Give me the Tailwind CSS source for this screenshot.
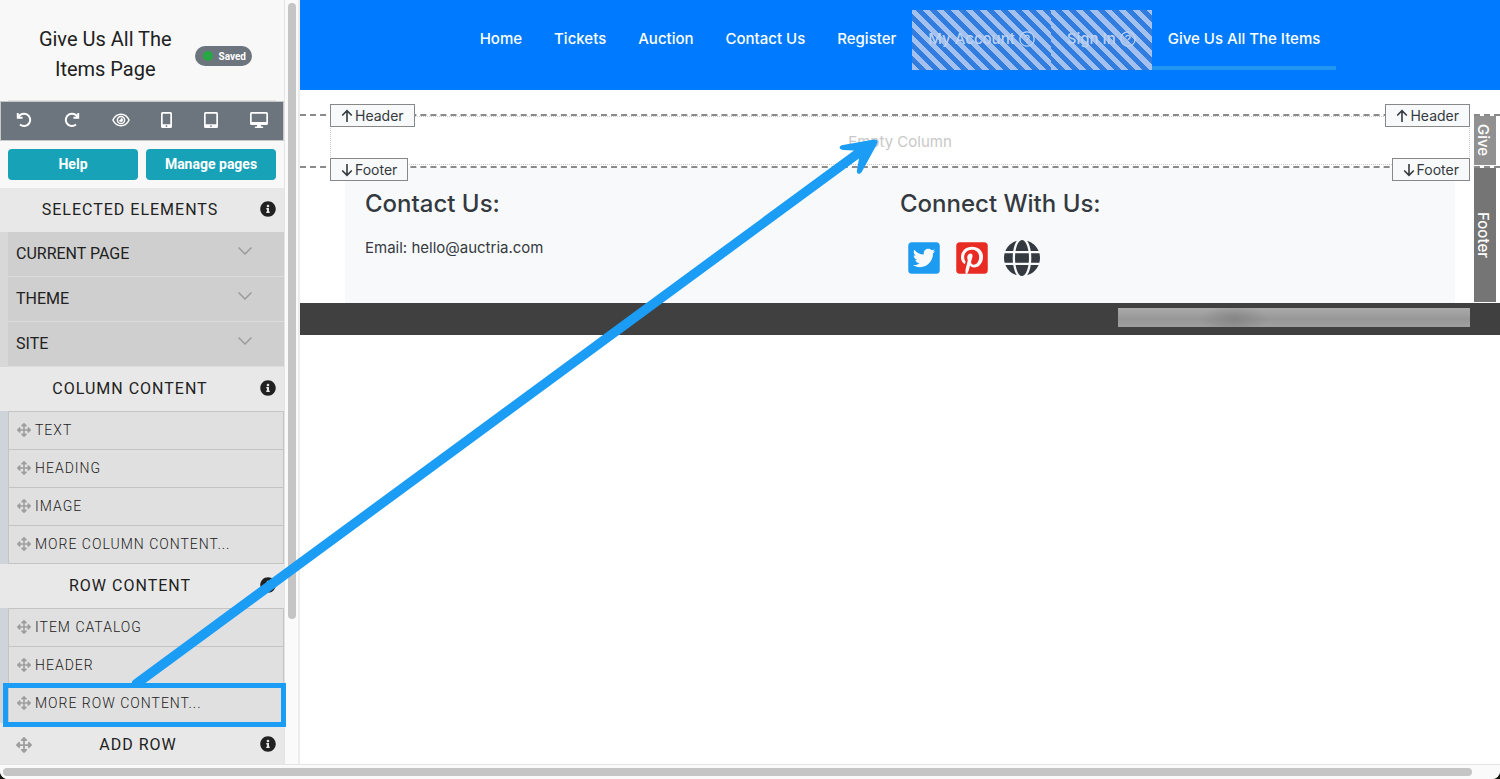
<!DOCTYPE html>
<html lang="en">
<head>
  <meta charset="UTF-8" />
  <meta name="viewport" content="width=device-width, initial-scale=1.0"/>
  <title>Give Us All The Items Page</title>
  <script src="https://cdn.jsdelivr.net/npm/@tailwindcss/browser@4"></script>
</head>
<body class="bg-[#14150c]">
  <!-- Shared icons -->
  <svg class="hidden" aria-hidden="true">
    <symbol id="move" viewBox="0 0 512 512"><path d="M352.201 425.775l-79.196 79.196c-9.373 9.373-24.568 9.373-33.941 0l-79.196-79.196c-15.119-15.119-4.411-40.971 16.971-40.97h51.162L228 284H127.196v51.162c0 21.382-25.851 32.09-40.971 16.971L7.029 272.937c-9.373-9.373-9.373-24.569 0-33.941L86.225 159.8c15.119-15.119 40.971-4.411 40.971 16.971V228H228V127.196h-51.23c-21.382 0-32.09-25.851-16.971-40.971l79.196-79.196c9.373-9.373 24.568-9.373 33.941 0l79.196 79.196c15.119 15.119 4.411 40.971-16.971 40.971h-51.162V228h100.804v-51.162c0-21.382 25.851-32.09 40.97-16.971l79.196 79.196c9.373 9.373 9.373 24.569 0 33.941L425.773 352.2c-15.119 15.119-40.971 4.411-40.97-16.971V284H284v100.804h51.23c21.382 0 32.09 25.851 16.971 40.971z"/></symbol>
    <symbol id="info" viewBox="0 0 512 512"><path d="M256 8C119.043 8 8 119.083 8 256c0 136.997 111.043 248 248 248s248-111.003 248-248C504 119.083 392.957 8 256 8zm0 110c23.196 0 42 18.804 42 42s-18.804 42-42 42-42-18.804-42-42 18.804-42 42-42zm56 254c0 6.627-5.373 12-12 12h-88c-6.627 0-12-5.373-12-12v-24c0-6.627 5.373-12 12-12h12v-64h-12c-6.627 0-12-5.373-12-12v-24c0-6.627 5.373-12 12-12h64c6.627 0 12 5.373 12 12v100h12c6.627 0 12 5.373 12 12v24z"/></symbol>
    <symbol id="chevron" viewBox="0 0 14 8"><path d="M.5.5 7 7 13.500.5" fill="none" stroke="currentColor" stroke-width="1.500"/></symbol>
    <symbol id="question" viewBox="0 0 16 16"><circle cx="8" cy="8" r="7.200" fill="none" stroke="currentColor" stroke-width="1.300"/><path d="M5.800 6.300c.1-1.300 1-2 2.200-2s2.200.7 2.200 1.900C10.200 7.600 8 7.700 8 9.300" fill="none" stroke="currentColor" stroke-width="1.300"/><circle cx="8" cy="11.400" r=".9"/></symbol>
    <symbol id="up" viewBox="0 0 12 14"><path d="M6 13V2M1.200 6.500 6 1.700l4.800 4.800" fill="none" stroke="currentColor" stroke-width="1.600"/></symbol>
    <symbol id="down" viewBox="0 0 12 14"><path d="M6 1v11M1.200 7.500 6 12.300l4.800-4.800" fill="none" stroke="currentColor" stroke-width="1.600"/></symbol>
  </svg>

  <div class="relative flex h-screen flex-col overflow-hidden rounded-b-lg bg-white">
    <div class="flex min-h-0 flex-1">

      <!-- Editor sidebar -->
      <aside class="w-[285px] shrink-0 overflow-hidden border-r border-[#e4e4e4] bg-[#f8f8f8] font-[Roboto,sans-serif] text-[#212121]">
        <div class="mx-2 flex h-[101px] items-center border-b border-[#e4e4e4] pt-2 pr-6 pl-2">
          <h1 class="flex-1 text-center text-xl leading-[30px]">Give Us All The<br>Items Page</h1>
          <span class="mt-1 flex h-5 items-center gap-1.5 rounded-full bg-[#6c757d] pr-1.5 pl-2 text-[10px] font-bold text-white"><i class="size-2.5 rounded-full bg-[#28a745]"></i>Saved</span>
        </div>

        <div class="flex h-10 items-center justify-between border border-[#c8c8c8] bg-[#6c757d] px-[15px] pb-0.5 text-white">
          <button aria-label="Undo"><svg class="size-4" viewBox="0 0 16 16" fill="none" stroke="currentColor" stroke-width="2"><path d="M1.800 1v4.800h4.800"/><path d="M2.300 5.500A6.200 6.200 0 1 1 4 12.600"/></svg></button>
          <button aria-label="Redo"><svg class="size-4" viewBox="0 0 16 16" fill="none" stroke="currentColor" stroke-width="2"><path d="M14.200 1v4.800H9.400"/><path d="M13.700 5.500A6.200 6.200 0 1 0 12 12.600"/></svg></button>
          <button aria-label="Preview"><svg class="h-4 w-[18px]" viewBox="0 0 18 16" fill="none" stroke="currentColor" stroke-width="1.500"><path d="M.9 8C2.700 4.300 5.600 2.200 9 2.200S15.300 4.300 17.100 8C15.300 11.700 12.400 13.800 9 13.800S2.700 11.700.9 8Z"/><circle cx="9" cy="8" r="3.600"/><path d="M9 6a2 2 0 1 1-2 2c.9.400 2-.8 2-2Z" fill="currentColor" stroke="none"/></svg></button>
          <button aria-label="Phone"><svg class="h-4 w-[11px]" viewBox="0 0 11 16" fill="currentColor" fill-rule="evenodd"><path d="M1.500 0h8A1.500 1.500 0 0 1 11 1.500v13A1.500 1.500 0 0 1 9.500 16h-8A1.500 1.500 0 0 1 0 14.500v-13A1.500 1.500 0 0 1 1.500 0ZM1.700 1.700v10.600h7.600V1.700ZM5.500 13.200a.9.900 0 1 0 0 1.800.9.900 0 0 0 0-1.800Z"/></svg></button>
          <button aria-label="Tablet"><svg class="h-4 w-3.5" viewBox="0 0 14 16" fill="currentColor" fill-rule="evenodd"><path d="M1.500 0h11A1.500 1.500 0 0 1 14 1.500v13a1.500 1.500 0 0 1-1.500 1.500h-11A1.500 1.500 0 0 1 0 14.500v-13A1.500 1.500 0 0 1 1.500 0ZM1.700 1.700v10.600h10.600V1.700ZM7 13.200A.9.900 0 1 0 7 15a.9.900 0 0 0 0-1.800Z"/></svg></button>
          <button aria-label="Desktop"><svg class="h-4 w-[18px]" viewBox="0 0 18 16" fill="currentColor" fill-rule="evenodd"><path d="M1.600 0h14.800A1.600 1.600 0 0 1 18 1.600v9.800a1.600 1.600 0 0 1-1.600 1.600h-5.700l.5 1.500h1.300a.75.750 0 0 1 0 1.500h-7a.75.750 0 0 1 0-1.500h1.300l.5-1.500H1.600A1.600 1.600 0 0 1 0 11.400V1.600A1.600 1.600 0 0 1 1.600 0ZM1.700 1.700v8.300h14.600V1.700Z"/></svg></button>
        </div>

        <div class="grid grid-cols-2 gap-2 p-2 text-sm font-bold text-white">
          <button class="h-[31px] rounded-sm bg-[#17a2b8] pb-0.5">Help</button>
          <button class="h-[31px] rounded-sm bg-[#17a2b8] pb-0.5">Manage pages</button>
        </div>

        <div class="flex h-11 items-center bg-[#e8e8e8] pr-2">
          <h2 class="flex-1 text-center tracking-[1px]">SELECTED ELEMENTS</h2>
          <button class="pb-0.5" aria-label="About selected elements"><svg class="size-4 fill-current"><use href="#info"/></svg></button>
        </div>
        <div class="border-l-8 border-[#d8d8d8] bg-[#cfcfcf]">
          <button class="flex h-[45px] w-full items-center justify-between border-b border-[#dcdcdc] pr-8 pb-1.5 pl-2"><span class="pt-1.5">CURRENT PAGE</span><svg class="h-2 w-3.5 text-[#9b9b9b]"><use href="#chevron"/></svg></button>
          <button class="flex h-[45px] w-full items-center justify-between border-b border-[#dcdcdc] pr-8 pb-1.5 pl-2"><span class="pt-1.5">THEME</span><svg class="h-2 w-3.5 text-[#9b9b9b]"><use href="#chevron"/></svg></button>
          <button class="flex h-[45px] w-full items-center justify-between border-b border-[#dcdcdc] pr-8 pb-1.5 pl-2"><span class="pt-1.5">SITE</span><svg class="h-2 w-3.5 text-[#9b9b9b]"><use href="#chevron"/></svg></button>
        </div>

        <div class="flex h-11 items-center bg-[#e8e8e8] pr-2">
          <h2 class="flex-1 text-center tracking-[1px]">COLUMN CONTENT</h2>
          <button class="pb-0.5" aria-label="About column content"><svg class="size-4 fill-current"><use href="#info"/></svg></button>
        </div>
        <div class="bg-[#cfd4da] pl-2">
          <ul class="border-x border-t border-[#c4c4c4] bg-[#e0e0e0] text-sm font-light tracking-[1px]">
            <li class="flex h-[38px] items-center gap-1 border-b border-[#c4c4c4] pb-0.5 pl-2"><svg class="size-3.5 fill-[#9e9e9e]"><use href="#move"/></svg>TEXT</li>
            <li class="flex h-[38px] items-center gap-1 border-b border-[#c4c4c4] pb-0.5 pl-2"><svg class="size-3.5 fill-[#9e9e9e]"><use href="#move"/></svg>HEADING</li>
            <li class="flex h-[38px] items-center gap-1 border-b border-[#c4c4c4] pb-0.5 pl-2"><svg class="size-3.5 fill-[#9e9e9e]"><use href="#move"/></svg>IMAGE</li>
            <li class="flex h-[38px] items-center gap-1 border-b border-[#c4c4c4] pb-0.5 pl-2"><svg class="size-3.5 fill-[#9e9e9e]"><use href="#move"/></svg>MORE COLUMN CONTENT...</li>
          </ul>
        </div>

        <div class="flex h-11 items-center bg-[#e8e8e8] pr-2">
          <h2 class="flex-1 text-center tracking-[1px]">ROW CONTENT</h2>
          <button class="pb-0.5" aria-label="About row content"><svg class="size-4 fill-current"><use href="#info"/></svg></button>
        </div>
        <div class="bg-[#cfd4da] pl-2">
          <ul class="border-x border-t border-[#c4c4c4] bg-[#e0e0e0] text-sm font-light tracking-[1px]">
            <li class="flex h-[38px] items-center gap-1 border-b border-[#c4c4c4] pb-0.5 pl-2"><svg class="size-3.5 fill-[#9e9e9e]"><use href="#move"/></svg>ITEM CATALOG</li>
            <li class="flex h-[38px] items-center gap-1 border-b border-[#c4c4c4] pb-0.5 pl-2"><svg class="size-3.5 fill-[#9e9e9e]"><use href="#move"/></svg>HEADER</li>
            <li class="flex h-[38px] items-center gap-1 border-b border-[#c4c4c4] pb-0.5 pl-2"><svg class="size-3.5 fill-[#9e9e9e]"><use href="#move"/></svg>MORE ROW CONTENT...</li>
          </ul>
        </div>

        <div class="flex h-11 items-center bg-[#e8e8e8] pr-2 pl-4">
          <svg class="-mr-4 size-4 fill-[#9e9e9e]"><use href="#move"/></svg>
          <h2 class="flex-1 text-center tracking-[1px]">ADD ROW</h2>
          <button class="pb-0.5" aria-label="About rows"><svg class="size-4 fill-current"><use href="#info"/></svg></button>
        </div>
      </aside>

      <!-- Sidebar scrollbar -->
      <div class="w-[15px] shrink-0 border-r-2 border-[#ececec] bg-[#fafafa] pt-[3px] pl-[3px]">
        <div class="h-[616px] w-2 rounded-full bg-[#c5c5c5]"></div>
      </div>

      <!-- Page preview -->
      <main class="min-w-0 flex-1 font-[Inter,sans-serif] text-[15px] text-[#343a40]">
        <nav class="flex h-[90px] justify-center bg-[#007bff] pt-2.5 font-medium text-white">
          <a href="#" class="flex h-[60px] items-center px-4 pb-0.5">Home</a>
          <a href="#" class="flex h-[60px] items-center px-4 pb-0.5">Tickets</a>
          <a href="#" class="flex h-[60px] items-center px-4 pb-0.5">Auction</a>
          <a href="#" class="flex h-[60px] items-center px-4 pb-0.5">Contact Us</a>
          <a href="#" class="flex h-[60px] items-center px-4 pb-0.5">Register</a>
          <a href="#" class="flex h-[60px] items-center gap-1 bg-[repeating-linear-gradient(45deg,#a3c0ee_0px,#a3c0ee_5px,#317ddf_5px,#317ddf_10px)] px-4 pb-0.5 text-[#bdd2f2]">My Account <svg class="size-4 fill-current"><use href="#question"/></svg></a>
          <a href="#" class="flex h-[60px] items-center gap-1 bg-[repeating-linear-gradient(45deg,#a3c0ee_0px,#a3c0ee_5px,#317ddf_5px,#317ddf_10px)] px-4 pb-0.5 text-[#bdd2f2]">Sign In <svg class="size-4 fill-current"><use href="#question"/></svg></a>
          <a href="#" class="flex h-[60px] items-center border-b-4 border-[#2196f3] px-4 pt-0.5">Give Us All The Items</a>
        </nav>

        <section class="relative mt-6 h-[52px] border-t-2 border-dashed border-[#8a8a8a] px-[30px] pb-px">
          <div class="flex h-full items-center justify-center border border-dotted border-[#c9c9c9] pt-1 text-[#c8c8c8]">Empty Column</div>
          <button class="absolute -top-3 left-[30px] flex h-[23px] items-center gap-0.5 border border-[#888] bg-[#f8f9fb] px-2.5 text-sm"><svg class="h-3.5 w-3"><use href="#up"/></svg>Header</button>
          <button class="absolute -top-3 right-[30px] flex h-[23px] items-center gap-0.5 border border-[#888] bg-[#f8f9fb] px-2.5 text-sm"><svg class="h-3.5 w-3"><use href="#up"/></svg>Header</button>
          <span class="absolute top-0 right-1 bottom-px flex w-[22px] items-center justify-center bg-[#919191] pr-1 font-medium text-white [writing-mode:vertical-rl]">Give</span>
        </section>

        <footer>
          <section class="relative h-[137px] border-t-2 border-dashed border-[#8a8a8a] px-[45px]">
            <div class="grid h-full grid-cols-2 bg-[#f8f9fb] px-5 pt-5">
              <div>
                <h3 class="text-2xl leading-8 font-medium">Contact Us:</h3>
                <p class="mt-4 leading-6">Email: hello@auctria.com</p>
              </div>
              <div>
                <h3 class="text-2xl leading-8 font-medium">Connect With Us:</h3>
                <div class="mt-5 flex items-center gap-4 pl-2">
                  <a href="#" aria-label="Twitter"><svg class="h-9 w-8 fill-[#1d9bf0]" viewBox="0 0 448 512"><path d="M400 32H48C21.500 32 0 53.500 0 80v352c0 26.500 21.500 48 48 48h352c26.500 0 48-21.500 48-48V80c0-26.500-21.500-48-48-48zm-48.900 158.800c.2 2.800.2 5.700.2 8.500 0 86.700-66 186.600-186.600 186.600-37.200 0-71.700-10.800-100.700-29.400 5.300.6 10.400.8 15.800.8 30.700 0 58.900-10.400 81.400-28-28.800-.6-53-19.500-61.300-45.500 10.100 1.500 19.200 1.500 29.600-1.200-30-6.100-52.500-32.500-52.500-64.400v-.8c8.700 4.900 18.900 7.900 29.600 8.300a65.447 65.447 0 0 1-29.200-54.600c0-12.200 3.200-23.400 8.900-33.100 32.300 39.800 80.800 65.800 135.200 68.600-9.300-44.500 24-80.600 64-80.600 18.900 0 35.900 7.900 47.900 20.700 14.800-2.800 29-8.300 41.600-15.800-4.900 15.200-15.200 28-28.800 36.100 13.200-1.400 26-5.100 37.800-10.200-8.900 13.100-20.100 24.700-32.900 34z"/></svg></a>
                  <a href="#" aria-label="Pinterest"><svg class="h-9 w-8 fill-[#e82c24]" viewBox="0 0 448 512"><path d="M448 80v352c0 26.500-21.500 48-48 48H154.400c9.800-16.400 22.400-40 27.400-59.300 3-11.500 15.300-58.400 15.300-58.400 8 15.300 31.400 28.200 56.300 28.200 74.100 0 127.400-68.100 127.400-152.700 0-81.100-66.200-141.800-151.400-141.800-106 0-162.200 71.100-162.200 148.600 0 36 19.200 80.800 49.800 95.100 4.700 2.200 7.100 1.200 8.200-3.300.8-3.400 5-20.100 6.800-27.800.6-2.500.3-4.600-1.700-7-10.100-12.300-18.300-34.900-18.300-56 0-54.200 41-106.600 110.900-106.600 60.300 0 102.600 41.100 102.600 99.900 0 66.400-33.500 112.400-77.200 112.400-24.100 0-42.100-19.900-36.400-44.400 6.900-29.200 20.300-60.700 20.300-81.800 0-53-75.500-45.700-75.500 25 0 21.700 7.300 36.500 7.300 36.500-31.400 132.800-36.100 134.500-29.600 192.600l2.200.8H48c-26.500 0-48-21.500-48-48V80c0-26.500 21.500-48 48-48h352c26.500 0 48 21.500 48 48z"/></svg></a>
                  <a href="#" aria-label="Website"><svg class="size-9 fill-current" viewBox="0 8 496 496"><path d="M336.500 160C322 70.700 287.800 8 248 8s-74 62.700-88.500 152h177zM152 256c0 22.200 1.200 43.500 3.300 64h185.300c2.100-20.500 3.300-41.800 3.300-64s-1.200-43.500-3.300-64H155.300c-2.100 20.500-3.300 41.800-3.300 64zm324.700-96c-28.600-67.900-86.500-120.400-158-141.600 24.400 33.800 41.200 84.700 50 141.600h108zM177.200 18.400C105.800 39.600 47.800 92.100 19.300 160h108c8.700-56.900 25.500-107.800 49.900-141.600zM487.400 192H372.700c2.100 21 3.300 42.500 3.300 64s-1.200 43-3.300 64h114.600c5.500-20.500 8.600-41.800 8.600-64s-3.100-43.500-8.500-64zM120 256c0-21.500 1.200-43 3.300-64H8.600C3.200 212.500 0 233.800 0 256s3.200 43.500 8.600 64h114.600c-2-21-3.200-42.500-3.200-64zm39.500 96c14.500 89.300 48.700 152 88.500 152s74-62.700 88.500-152h-177zm159.300 141.600c71.400-21.200 129.400-73.700 158-141.600h-108c-8.800 56.900-25.600 107.800-50 141.600zM19.300 352c28.600 67.900 86.500 120.400 158 141.600-24.400-33.800-41.200-84.700-50-141.600h-108z"/></svg></a>
                </div>
              </div>
            </div>
            <button class="absolute -top-2.5 left-[30px] flex h-[23px] items-center gap-0.5 border border-[#888] bg-[#f8f9fb] px-2.5 text-sm"><svg class="h-3.5 w-3"><use href="#down"/></svg>Footer</button>
            <button class="absolute -top-2.5 right-[30px] flex h-[23px] items-center gap-0.5 border border-[#888] bg-[#f8f9fb] px-2.5 text-sm"><svg class="h-3.5 w-3"><use href="#down"/></svg>Footer</button>
            <span class="absolute top-0 right-1 bottom-px flex w-[22px] items-center justify-center bg-[#757575] pr-1 font-medium text-white [writing-mode:vertical-rl]">Footer</span>
          </section>
          <div class="flex h-8 justify-end bg-[#404040] pt-[5px] pr-[30px]">
            <div class="h-[19px] w-[352px] bg-[radial-gradient(ellipse_34px_14px_at_33%_60%,#868686,transparent),linear-gradient(#aaa,#979797_60%,#a0a0a0)]"></div>
          </div>
        </footer>
      </main>
    </div>

    <!-- Page scrollbar -->
    <div class="h-[15px] shrink-0 border-t border-[#e4e4e4] bg-[#fafafa] pt-[3px] pr-7 pl-[3px]">
      <div class="h-2 rounded-full bg-[#c5c5c5]"></div>
    </div>

    <!-- Callout: drag the row content onto the empty column -->
    <svg class="pointer-events-none absolute top-0 left-0 h-[779px] w-[900px]" viewBox="0 0 900 779" fill="#1b9df5">
      <rect x="5.500" y="685.500" width="278" height="39" fill="none" stroke="#1b9df5" stroke-width="5"/>
      <path d="M134 679.500 854 150.500 843 150C838 149 839 145.500 843 145L874 139.500Q879 139.500 877 144L862 171.500C860 175.500 856 174 857 170L859 158.500 140 687Q135 689 132 684Q131 681.500 134 679.500Z"/>
    </svg>
  </div>
</body>
</html>
